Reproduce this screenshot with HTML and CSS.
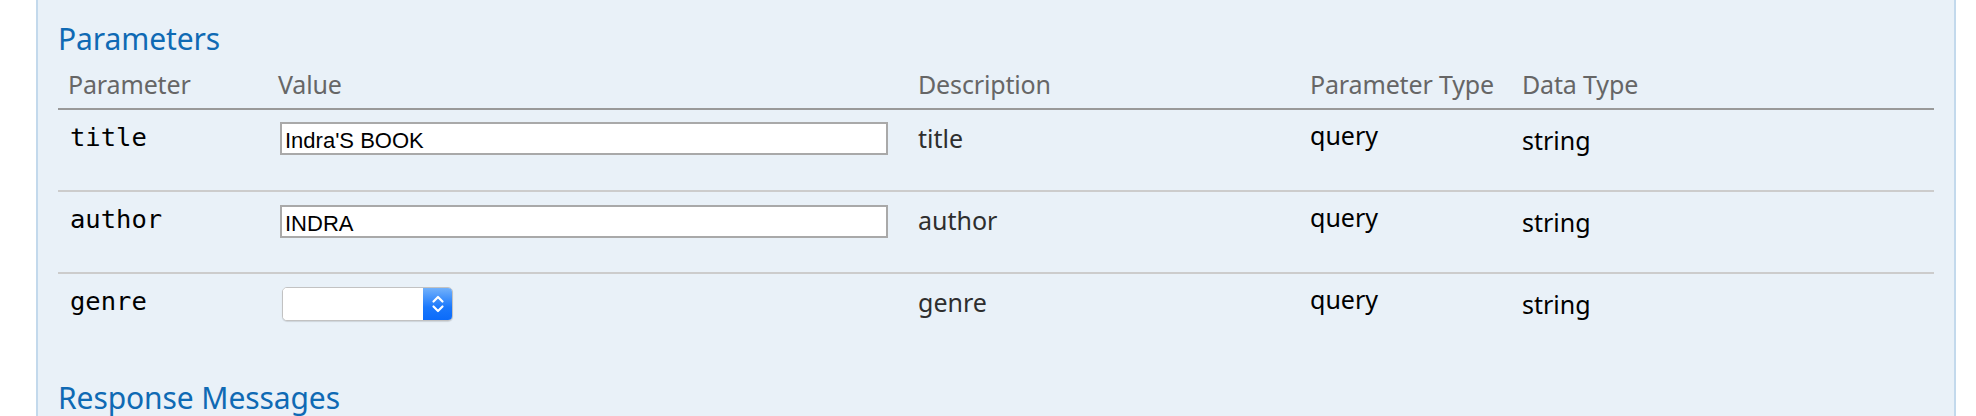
FILE: index.html
```html
<!DOCTYPE html>
<html lang="en">
<head>
<meta charset="utf-8">
<title>Parameters</title>
<link rel="stylesheet" href="styles.css">
</head>
<body>
<div class="panel">
  <h4 class="heading">Parameters</h4>
  <div class="params">
    <div class="row head">
      <div class="th">Parameter</div>
      <div class="th">Value</div>
      <div class="th">Description</div>
      <div class="th">Parameter Type</div>
      <div class="th">Data Type</div>
    </div>
    <div class="row body">
      <div class="c-name">title</div>
      <div class="c-val"><input class="text-in" type="text" value="Indra'S BOOK"></div>
      <div class="c-desc">title</div>
      <div class="c-ptype">query</div>
      <div class="c-dtype">string</div>
    </div>
    <div class="row body">
      <div class="c-name">author</div>
      <div class="c-val c-val-2"><input class="text-in" type="text" value="INDRA"></div>
      <div class="c-desc">author</div>
      <div class="c-ptype">query</div>
      <div class="c-dtype">string</div>
    </div>
    <div class="row body last">
      <div class="c-name">genre</div>
      <div class="c-val c-val-3">
        <div class="select">
          <span class="select-field"></span>
          <span class="select-btn">
            <svg width="14" height="20" viewBox="0 0 14 20" aria-hidden="true">
              <path d="M2.5 7.5 L7 3 L11.5 7.5" fill="none" stroke="#fff" stroke-width="2.2" stroke-linecap="round" stroke-linejoin="round"/>
              <path d="M2.5 12.5 L7 17 L11.5 12.5" fill="none" stroke="#fff" stroke-width="2.2" stroke-linecap="round" stroke-linejoin="round"/>
            </svg>
          </span>
        </div>
      </div>
      <div class="c-desc">genre</div>
      <div class="c-ptype">query</div>
      <div class="c-dtype">string</div>
    </div>
  </div>
  <h4 class="heading heading-resp">Response Messages</h4>
</div>
</body>
</html>
```

FILE: styles.css
```css
html, body {
  margin: 0;
  padding: 0;
  background: #ffffff;
  overflow: hidden;
}

.panel {
  margin-left: 36px;
  width: 1920px;
  height: 416px;
  box-sizing: border-box;
  border-left: 2px solid #c3d9ec;
  border-right: 2px solid #c3d9ec;
  background: #e9f1f8;
  padding: 19px 20px 0 20px;
}

.heading {
  margin: 0;
  font-family: "Noto Sans", "Open Sans", sans-serif;
  font-weight: normal;
  font-size: 30px;
  line-height: 40px;
  color: #0f6ab4;
  letter-spacing: -0.1px;
}

.heading-resp {
  margin-top: 24px;
}

.row {
  display: grid;
  grid-template-columns: 210px 640px 392px 212px 1fr;
  box-sizing: border-box;
}

.head {
  height: 51px;
  border-bottom: 2px solid #999999;
}

.th {
  padding: 8px 0 0 10px;
  font-family: "Noto Sans", "Open Sans", sans-serif;
  font-size: 25px;
  line-height: 34px;
  color: #666666;
  letter-spacing: -0.15px;
}

.body {
  height: 82px;
  border-bottom: 2px solid #cccccc;
}

.body.last {
  height: 80px;
  border-bottom: none;
}

.body > div {
  padding-left: 10px;
}

.body > .c-name {
  padding-left: 12px;
}

.c-name {
  padding-top: 10px;
  font-family: "DejaVu Sans Mono", "Liberation Mono", monospace;
  font-size: 25.5px;
  line-height: 34px;
  color: #000000;
}

.c-val {
  padding-top: 12px;
}

.c-val-2,
.c-val-3 {
  padding-top: 13px;
}

.c-desc,
.c-ptype,
.c-dtype {
  font-family: "Noto Sans", "Open Sans", sans-serif;
  font-size: 25px;
  line-height: 34px;
}

.c-desc {
  padding-top: 11px;
  color: #2e2e2e;
}

.c-ptype {
  padding-top: 8px;
  color: #000000;
}

.c-dtype {
  padding-top: 13px;
  color: #000000;
}

.text-in {
  display: block;
  margin: 0 0 0 2px;
  width: 608px;
  height: 33px;
  box-sizing: border-box;
  border: 2px solid #a9a9a9;
  border-radius: 0;
  background: #ffffff;
  padding: 5px 2px 0 3px;
  font-family: "Liberation Sans", Arial, sans-serif;
  font-size: 22px;
  color: #000000;
  outline: none;
}

.select {
  display: flex;
  margin-left: 4px;
  width: 171px;
  height: 34px;
  box-sizing: border-box;
  border: 1px solid #c2c2c2;
  border-radius: 5px;
  overflow: hidden;
  background: #ffffff;
  box-shadow: 0 1px 1px rgba(0, 0, 0, 0.12);
}

.select-field {
  flex: 1;
  background: #ffffff;
}

.select-btn {
  width: 29px;
  display: flex;
  align-items: center;
  justify-content: center;
  background: linear-gradient(#72b1fb, #1a78fc 60%, #0b6bfa);
}
```
